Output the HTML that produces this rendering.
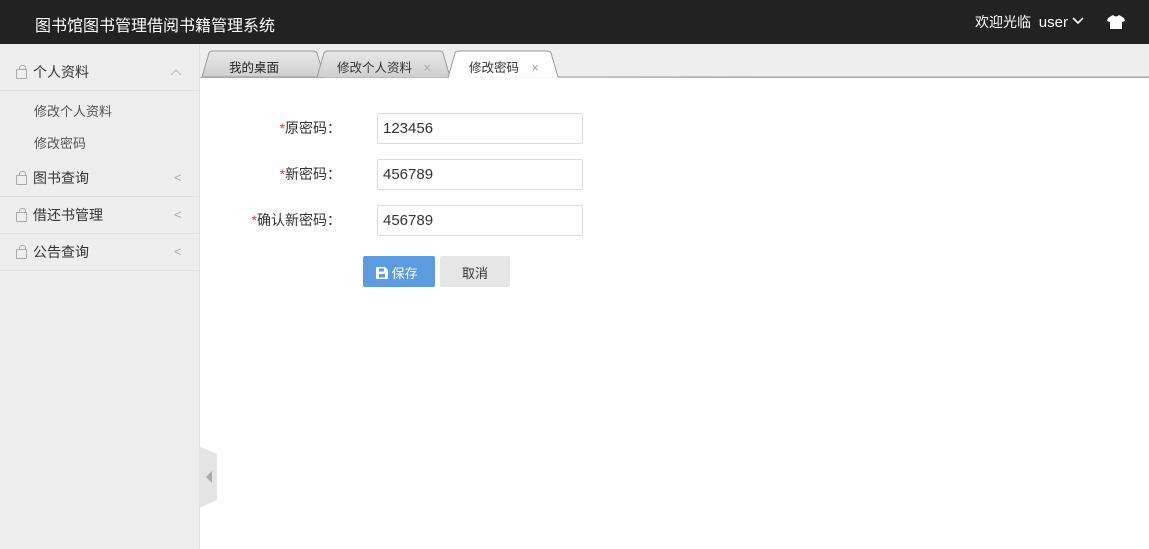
<!DOCTYPE html>
<html><head><meta charset="utf-8"><style>
*{margin:0;padding:0;box-sizing:border-box}
body{width:1149px;height:549px;overflow:hidden;font-family:"Liberation Sans","Noto Sans CJK SC",sans-serif;background:#fff;position:relative;font-size:14px;color:#333}
.hd{position:absolute;left:0;top:0;width:1149px;height:44px;background:#222;color:#fff}
.hd .t{position:absolute;left:35px;top:12px;font-size:16px}
.hd .r{position:absolute;left:975px;top:12px;font-size:14px}
.sb{position:absolute;left:0;top:44px;width:200px;height:505px;background:#eee;border-right:1px solid #e0e0e0}
.it{position:absolute;left:0;width:199px;height:37px;border-bottom:1px solid #e2e2e2;font-size:14px;color:#333}
.it span{position:absolute;left:33px;top:8px}
.it i{position:absolute;left:16px;top:15px;width:11px;height:10px;border:1px solid #aaa;border-radius:1px}
.it i:before{content:"";position:absolute;left:2px;top:-5px;width:5px;height:4px;border:1px solid #aaa;border-bottom:none;border-radius:3px 3px 0 0}
.it b{position:absolute;left:174px;top:10px;font-weight:normal;color:#aaa;font-size:13px}
.sub{position:absolute;left:34px;font-size:13px;color:#555}
.tb{position:absolute;left:200px;top:44px;width:949px;height:34px;background:#eee;border-bottom:1px solid #bbb}
.lbl{position:absolute;width:141px;left:200px;text-align:right;font-size:14px;color:#333;letter-spacing:0}
.lbl em{color:#e33;font-style:normal}
.inp{position:absolute;left:377px;width:206px;height:31px;border:1px solid #ddd;border-radius:2px;padding:6px 0 0 5px;font-size:15px;color:#333}
</style></head><body>
<div class="hd"><div class="t">图书馆图书管理借阅书籍管理系统</div>
<div class="r">欢迎光临&nbsp;&nbsp;<span style="font-size:15px">user</span> <svg width="12" height="8" style="vertical-align:2px"><path d="M1 1L6 6L11 1" stroke="#fff" stroke-width="1.6" fill="none"/></svg></div>
<svg style="position:absolute;left:1107px;top:15px" width="18" height="14"><path d="M6 0L1 3L0 6L3 7L3 14L15 14L15 7L18 6L17 3L12 0Q9 3 6 0Z" fill="#fff"/></svg>
</div>
<div class="sb">
<div class="it" style="top:10px;height:37px;border:none"><i></i><span>个人资料</span><svg style="position:absolute;left:170px;top:14px" width="12" height="8"><path d="M1 7L6 2L11 7" stroke="#bbb" fill="none"/></svg></div>
<div style="position:absolute;left:0;top:46px;width:199px;border-top:1px solid #e2e2e2"></div>
<div class="sub" style="top:57px">修改个人资料</div>
<div class="sub" style="top:89px">修改密码</div>
<div class="it" style="top:116px"><i></i><span>图书查询</span><b>&lt;</b></div>
<div class="it" style="top:153px"><i></i><span>借还书管理</span><b>&lt;</b></div>
<div class="it" style="top:190px"><i></i><span>公告查询</span><b>&lt;</b></div>
<svg style="position:absolute;left:199px;top:402px" width="18" height="62"><path d="M0 0L18 8L18 54L0 62Z" fill="#e4e4e4"/><path d="M13 25L7 31L13 37Z" fill="#aaa"/></svg>
</div>
<div class="tb">
<svg width="949" height="34" style="position:absolute;left:0;top:0">
<defs><linearGradient id="g" x1="0" y1="0" x2="0" y2="1"><stop offset="0" stop-color="#e8e8e8"/><stop offset="1" stop-color="#cfcfcf"/></linearGradient></defs>
<path d="M2 33L9 9Q10 7 13 7L113 7Q116 7 117 9L124 33Z" fill="url(#g)" stroke="#999"/>
<path d="M117 33L124 9Q125 7 128 7L239 7Q242 7 243 9L250 33" fill="url(#g)" stroke="#999"/>
<path d="M248 34L255 9Q256 7 259 7L347 7Q350 7 351 9L358 33L949 33" fill="#fff" stroke="#999"/>
</svg>
<div style="position:absolute;left:29px;top:13px;font-size:12.5px;color:#222">我的桌面</div>
<div style="position:absolute;left:137px;top:13px;font-size:12.5px;color:#333">修改个人资料 <span style="color:#aaa;margin-left:8px">×</span></div>
<div style="position:absolute;left:269px;top:13px;font-size:12.5px;color:#333">修改密码 <span style="color:#999;margin-left:9px">×</span></div>
</div>
<div class="lbl" style="top:118px"><em>*</em>原密码：</div>
<div class="lbl" style="top:164px"><em>*</em>新密码：</div>
<div class="lbl" style="top:210px"><em>*</em>确认新密码：</div>
<div class="inp" style="top:113px">123456</div>
<div class="inp" style="top:159px">456789</div>
<div class="inp" style="top:205px">456789</div>
<div style="position:absolute;left:363px;top:256px;width:72px;height:31px;background:#5b9bde;border-radius:2px;color:#fff;font-size:13px;padding:7px 0 0 13px"><svg width="12" height="12" style="vertical-align:-1px"><path d="M0 1Q0 0 1 0L9 0L12 3L12 11Q12 12 11 12L1 12Q0 12 0 11Z" fill="#fff"/><rect x="3" y="1.5" width="5" height="3" fill="#5b9bde"/><rect x="3" y="7" width="6" height="3.5" fill="#5b9bde"/></svg> 保存</div>
<div style="position:absolute;left:440px;top:256px;width:70px;height:31px;background:#e6e6e6;border-radius:2px;color:#333;font-size:13px;text-align:center;padding-top:7px">取消</div>
</body></html>
